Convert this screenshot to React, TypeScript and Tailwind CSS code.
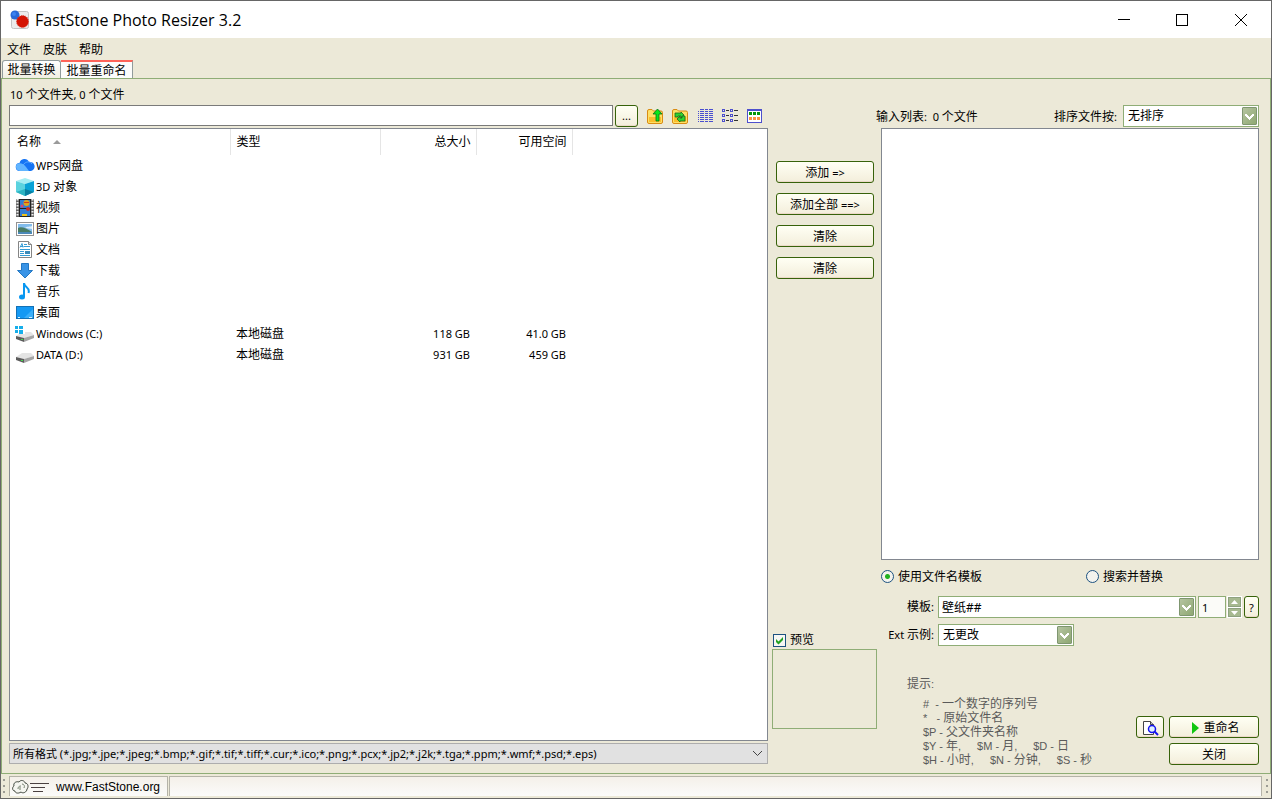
import { useState } from "react"
import type { ReactNode } from "react"

const buttonClass =
  "flex h-[22px] items-center justify-center rounded-[3px] border border-[#37620a] bg-linear-to-b from-[#fffff4] to-[#f3eedb] pt-px shadow-[inset_0_-1px_0_#ecd9c8]"

function Latin({ children }: { children: ReactNode }) {
  return <span className="whitespace-pre text-[11px]">{children}</span>
}

function Chevron() {
  return (
    <svg width="9" height="7" viewBox="0 0 9 7" shapeRendering="crispEdges">
      <path d="M0 1h2v1h1v1h1v1h1v-1h1v-1h1v-1h2v2h-1v1h-1v1h-1v1h-1v1h-1v-1h-1v-1h-1v-1h-1v-1h-1z" fill="#fff" />
    </svg>
  )
}

function ArrowBox() {
  return (
    <span className="pointer-events-none absolute top-[2px] right-[2px] flex h-[18px] w-[15px] items-center justify-center rounded-[1px] border border-[#7f9670] bg-linear-to-br from-[#b5c4a0] to-[#8fa873]">
      <Chevron />
    </span>
  )
}

function Combo({ id, options, className }: { id: string; options: string[]; className: string }) {
  return (
    <div className={`relative h-[22px] ${className}`}>
      <select
        id={id}
        className="block h-full w-full appearance-none border border-[#8fad76] bg-white pr-5 pl-[4px] text-[12px] leading-5 outline-none"
      >
        {options.map((o) => (
          <option key={o}>{o}</option>
        ))}
      </select>
      <ArrowBox />
    </div>
  )
}

function AppIcon() {
  return (
    <svg width="20" height="20" viewBox="0 0 20 20">
      <rect x="1.5" y="1.5" width="17" height="17" rx="2" fill="#ececec" stroke="#c4c4c4" />
      <circle cx="5" cy="5" r="4.5" fill="#2869d8" />
      <circle cx="4" cy="4" r="2" fill="#3c82f0" />
      <circle cx="12.500" cy="11.500" r="6" fill="#d41404" stroke="#e04030" strokeDasharray="1 1" />
    </svg>
  )
}

function CloudIcon() {
  return (
    <svg width="20" height="18" viewBox="0 0 20 18">
      <path d="M5 14a4 4 0 0 1-.5-8A5 5 0 0 1 14 5a4.600 4.600 0 0 1 2 9z" fill="#1574f4" />
      <path d="M2 7C5 5 9 7 11 10l3 4H5A4.200 4.200 0 0 1 2 7z" fill="#62b5ff" />
      <path d="M8 8c3-4 7-4 9-1" stroke="#5ba9ff" fill="none" />
    </svg>
  )
}

function CubeIcon() {
  return (
    <svg width="20" height="20" viewBox="0 0 20 20">
      <path d="M1 4l9-3 9 3-9 3z" fill="#a5eef3" />
      <path d="M1 4l9 3v12l-9-4z" fill="#5bd3df" />
      <path d="M10 7l9-3v11l-9 4z" fill="#0aa3d6" />
      <path d="M1 15l9-3v7z" fill="#2cb4c2" />
      <path d="M10 12l9 3-9 4z" fill="#087f9f" />
    </svg>
  )
}

function FilmIcon() {
  return (
    <svg width="20" height="20" viewBox="0 0 20 20">
      <path d="M1 1h18v18H1z" fill="#666" />
      <path d="M2.500 1v18M17.500 1v18" stroke="#eee" strokeWidth="2" strokeDasharray="1.500 1.500" />
      <path d="M4 1h12v18H4z" fill="#222" />
      <path d="M5 2h10v8H5zM5 11h10v7H5z" fill="#327ed5" />
      <circle cx="11.500" cy="5" r="3" fill="#e0a51c" />
      <path d="M9 4h5v1H9z" fill="#d43826" />
      <circle cx="7" cy="8" r="1.500" fill="#da4577" />
      <circle cx="13" cy="11" r="2" fill="#c72e25" />
      <path d="M7 16h5v2H7z" fill="#edc31f" />
    </svg>
  )
}

function PictureIcon() {
  return (
    <svg width="20" height="18" viewBox="0 0 20 18">
      <rect x="1.500" y="2.500" width="17" height="13" fill="#fff" stroke="#929292" />
      <path d="M3 4h14v10H3z" fill="#82bcec" />
      <path d="M10 8c2-2 5-1 7-2v3z" fill="#dceffc" />
      <path d="M3 8c3-2 8 0 14 4v2H3z" fill="#487c66" />
      <path d="M3 12h14v2H3z" fill="#4b89b9" />
    </svg>
  )
}

function DocumentIcon() {
  return (
    <svg width="20" height="20" viewBox="0 0 20 20">
      <path d="M3.500 1.500h10l3 3v13h-13z" fill="#fff" stroke="#858585" />
      <path d="M13.500 1.500v3h3" fill="#ddd" stroke="#858585" />
      <path d="M5 7.500l2-4 1 4M5.500 6.500h3M9 4.500h3M9 6.500h6M5 9.500h10M5 11.500h4M5 13.500h4M5 15.500h10" fill="none" stroke="#349bd4" />
      <path d="M10 11h5v3h-5z" fill="#3b8ab9" />
    </svg>
  )
}

function DownIcon() {
  return (
    <svg width="20" height="18" viewBox="0 0 20 18">
      <path d="M6.500 1.500h7v7h4L10 16 2.500 8.500h4z" fill="#3a94e6" stroke="#2378c4" />
    </svg>
  )
}

function MusicIcon() {
  return (
    <svg width="20" height="18" viewBox="0 0 20 18">
      <ellipse cx="7" cy="14" rx="3" ry="2.500" fill="#0897f1" />
      <path d="M9 14V0c.5 5 6.500 4 4.500 10" fill="none" stroke="#0897f1" strokeWidth="2" />
    </svg>
  )
}

function DesktopIcon() {
  return (
    <svg width="20" height="16" viewBox="0 0 20 16">
      <rect x="1.500" y="1.500" width="17" height="12" fill="#1499f4" stroke="#1371b5" />
      <path d="M9 13l9-9v9z" fill="#3baff9" />
      <path d="M3 12.500h2M14 12.500h3" stroke="#d8f1ff" />
    </svg>
  )
}

function DriveIcon({ windows }: { windows?: boolean }) {
  return (
    <svg width="20" height="18" viewBox="0 0 20 18">
      <path d="M1 11l6-4h9l3 3-10 3z" fill="#e4e4e4" />
      <path d="M1 11l8 2v4l-8-3z" fill="#5c5c5c" />
      <path d="M9 13l10-3v3L9 17z" fill="#a5a5a5" />
      <path d="M6 14h2v1H6z" fill="#46d450" />
      {windows && (
        <>
          <path d="M0 0h10v9H0z" fill="#fff" />
          <path d="M0 1h3v3H0zM4 1h4v3H4zM0 5h3v3H0zM4 5h4v4H4z" fill="#16aeea" />
        </>
      )}
    </svg>
  )
}

function Folder({ children }: { children: ReactNode }) {
  return (
    <svg width="16" height="16" viewBox="0 0 16 16">
      <path d="M.5 3Q.5 1.500 2 1.500h3L6.500 3H14q1.500 0 1.500 1.500V14q0 1.500-1.500 1.500H2Q.5 15.500.5 14z" fill="#fde066" stroke="#d98b12" />
      <path d="M2 9h12v5H2z" fill="#f9b51d" opacity=".8" />
      {children}
    </svg>
  )
}

const toolbar = [
  {
    title: "向上",
    icon: (
      <Folder>
        <path d="M10.500 1L15 6h-3v7H9V6H6z" fill="#09e619" stroke="#087018" strokeWidth=".8" />
      </Folder>
    ),
  },
  {
    title: "刷新",
    icon: (
      <Folder>
        <path d="M3 9V5h6V4l3 3-3 3V8H6v1z" fill="#2fd430" stroke="#17671b" strokeWidth=".8" />
        <path d="M13 8v5H8v1l-3-3 3-3v2h2V8z" fill="#2fd430" stroke="#17671b" strokeWidth=".8" />
      </Folder>
    ),
  },
  {
    title: "详细信息",
    icon: (
      <svg width="16" height="16" viewBox="0 0 16 16" shapeRendering="crispEdges">
        {[1, 3, 5, 7, 9, 11, 13].map((y) => (
          <g key={y} fill="#4a4fd0">
            {y > 1 && <rect x="1" y={y} width="1" height="1" />}
            <rect x="3" y={y} width="4" height="1" />
            <rect x="8" y={y} width="3" height="1" />
            <rect x="12" y={y} width="4" height="1" />
          </g>
        ))}
      </svg>
    ),
  },
  {
    title: "列表",
    icon: (
      <svg width="16" height="16" viewBox="0 0 16 16" shapeRendering="crispEdges">
        <path d="M.5 1.500h2v2h-2zM8.500 1.500h2v2h-2zM.5 6.500h2v2h-2zM8.500 6.500h2v2h-2zM.5 11.500h2v2h-2zM8.500 11.500h2v2h-2z" fill="none" stroke="#4d50cd" />
        <path d="M4 2.500h3M12 2.500h4M4 7.500h3M12 7.500h4M4 12.500h3M12 12.500h4" stroke="#333" />
      </svg>
    ),
  },
  {
    title: "缩略图",
    icon: (
      <svg width="16" height="16" viewBox="0 0 16 16" shapeRendering="crispEdges">
        <path d="M.5 1.500h14v13H.5z" fill="#fff" stroke="#4d50cd" />
        <path d="M0 1h15v2H0z" fill="#4d50cd" />
        <path d="M2 4h3v3H2zM6 4h3v3H6zM10 4h3v3h-3z" fill="#06950c" />
        <path d="M2 9h3v3H2zM6 9h3v3H6zM10 9h3v3h-3z" fill="#ff9343" />
      </svg>
    ),
  },
]

const rows = [
  { icon: <CloudIcon />, name: <><Latin>WPS</Latin>网盘</> },
  { icon: <CubeIcon />, name: <><Latin>3D </Latin>对象</> },
  { icon: <FilmIcon />, name: "视频" },
  { icon: <PictureIcon />, name: "图片" },
  { icon: <DocumentIcon />, name: "文档" },
  { icon: <DownIcon />, name: "下载" },
  { icon: <MusicIcon />, name: "音乐" },
  { icon: <DesktopIcon />, name: "桌面" },
  { icon: <DriveIcon windows />, name: <Latin>Windows (C:)</Latin>, type: "本地磁盘", size: "118 GB", free: "41.0 GB" },
  { icon: <DriveIcon />, name: <Latin>DATA (D:)</Latin>, type: "本地磁盘", size: "931 GB", free: "459 GB" },
]

const filter =
  "所有格式 (*.jpg;*.jpe;*.jpeg;*.bmp;*.gif;*.tif;*.tiff;*.cur;*.ico;*.png;*.pcx;*.jp2;*.j2k;*.tga;*.ppm;*.wmf;*.psd;*.eps)"

function TitleBar() {
  return (
    <header className="flex h-[37px] items-center bg-white pl-[9px]">
      <AppIcon />
      <h1 className="ml-[5px] flex-1 font-['Open_Sans','Noto_Sans',sans-serif] text-[16px] leading-6">FastStone Photo Resizer 3.2</h1>
      <button aria-label="最小化" className="flex h-full w-[58px] items-center justify-center">
        <svg width="12" height="12" viewBox="0 0 12 12" shapeRendering="crispEdges">
          <path d="M0 5.500h12" stroke="#000" />
        </svg>
      </button>
      <button aria-label="最大化" className="flex h-full w-[58px] items-center justify-center">
        <svg width="12" height="12" viewBox="0 0 12 12" shapeRendering="crispEdges">
          <path d="M.5.500h11v11H.5z" fill="none" stroke="#000" />
        </svg>
      </button>
      <button aria-label="关闭窗口" className="flex h-full w-[60px] items-center justify-center">
        <svg width="12" height="12" viewBox="0 0 12 12">
          <path d="M0 0l12 12M12 0L0 12" stroke="#000" />
        </svg>
      </button>
    </header>
  )
}

function FileBrowser() {
  return (
    <section className="flex min-w-0 flex-1 flex-col">
      <p className="mt-[7px] h-[18px] pl-px leading-[18px]">
        <Latin>10 </Latin>个文件夹<Latin>, 0 </Latin>个文件
      </p>
      <div className="flex h-6 items-center pb-px">
        <input aria-label="路径" className="h-[21px] min-w-0 flex-1 border border-[#7a7a7a] bg-white px-1 outline-none" />
        <button className={`${buttonClass} ml-[2px] w-[23px] text-[11px]`}>...</button>
        <div className="mr-[5px] ml-[9px] flex gap-[9px]">
          {toolbar.map((t) => (
            <button key={t.title} title={t.title}>
              {t.icon}
            </button>
          ))}
        </div>
      </div>
      <div className="flex-1 border border-[#828790] bg-white">
        <table className="w-full table-fixed border-collapse">
          <colgroup>
            <col className="w-[220px]" />
            <col className="w-[150px]" />
            <col className="w-[96px]" />
            <col className="w-[96px]" />
            <col />
          </colgroup>
          <thead>
            <tr className="h-[26px] *:font-normal">
              <th className="border-r border-[#e5e5e5] p-0 pl-[7px] text-left">
                <span className="flex items-center gap-3">
                  名称
                  <svg width="8" height="4" viewBox="0 0 8 4">
                    <path d="M0 4l4-4 4 4z" fill="#9a9a9a" />
                  </svg>
                </span>
              </th>
              <th className="border-r border-[#e5e5e5] p-0 pl-[6px] text-left">类型</th>
              <th className="border-r border-[#e5e5e5] p-0 pr-[5px] text-right">总大小</th>
              <th className="border-r border-[#e5e5e5] p-0 pr-[5px] text-right">可用空间</th>
              <th className="p-0" />
            </tr>
          </thead>
          <tbody>
            {rows.map((r, i) => (
              <tr key={i} className="h-[21px] *:p-0">
                <td>
                  <span className="flex h-[21px] items-center pl-[5px]">
                    {r.icon}
                    <span className="ml-px">{r.name}</span>
                  </span>
                </td>
                <td>
                  <span className="pl-[6px]">{r.type}</span>
                </td>
                <td className="text-right text-[11px]">
                  <span className="pr-[6px]">{r.size}</span>
                </td>
                <td className="text-right text-[11px]">
                  <span className="pr-[6px]">{r.free}</span>
                </td>
                <td />
              </tr>
            ))}
          </tbody>
        </table>
      </div>
      <div className="relative mt-[2px] h-[21px]">
        <select
          aria-label="文件格式"
          className="block h-full w-full appearance-none border border-[#adadad] bg-[#e1e1e1] pr-6 pl-[3px] text-[11px] outline-none"
        >
          <option>{filter}</option>
        </select>
        <svg width="11" height="7" viewBox="0 0 11 7" className="pointer-events-none absolute top-[7px] right-[5px]">
          <path d="M1 1l4.500 4.500L10 1" fill="none" stroke="#444" />
        </svg>
      </div>
    </section>
  )
}

function Actions() {
  const [preview, setPreview] = useState(true)

  return (
    <section className="flex w-[105px] shrink-0 flex-col">
      <div className="mt-[82px] flex flex-col gap-[10px] pr-[3px] pl-1">
        <button className={buttonClass}>
          添加<Latin> =&gt;</Latin>
        </button>
        <button className={buttonClass}>
          添加全部<Latin> ==&gt;</Latin>
        </button>
        <button className={buttonClass}>清除</button>
        <button className={buttonClass}>清除</button>
      </div>
      <label className="mt-auto flex h-[18px] items-center pl-px">
        <span className="relative flex size-[13px]">
          <input
            type="checkbox"
            checked={preview}
            onChange={(e) => setPreview(e.target.checked)}
            className="size-[13px] appearance-none border border-[#1c5180] bg-[#f6f6f3]"
          />
          {preview && (
            <svg width="13" height="13" viewBox="0 0 13 13" className="pointer-events-none absolute inset-0">
              <path d="M3 5l2.500 2.500L10 3v3l-4.500 4.500L3 8z" fill="#21a121" />
            </svg>
          )}
        </span>
        <span className="ml-1">预览</span>
      </label>
      <div className="mb-[35px] h-20 border border-[#8fad76]" />
    </section>
  )
}

function Radio({ label, checked, onChange }: { label: string; checked: boolean; onChange: () => void }) {
  return (
    <label className="flex items-center gap-1">
      <input
        type="radio"
        name="mode"
        checked={checked}
        onChange={onChange}
        className="size-[13px] appearance-none rounded-full border border-[#1c5180] bg-[#f3f3ee] checked:bg-[radial-gradient(circle,#21b121_2px,#f3f3ee_3px)]"
      />
      {label}
    </label>
  )
}

function Hints() {
  return (
    <div className="flex-1 pl-[26px] font-['Liberation_Sans','Noto_Sans_CJK_SC',sans-serif] text-[#5a5a5a]">
      <p className="h-5 leading-5">提示<Latin>:</Latin></p>
      <div className="mt-[3px] pl-4 leading-[14px]">
        <p className="h-[14px]"><Latin>#  - </Latin>一个数字的序列号</p>
        <p className="h-[14px]"><Latin>*   - </Latin>原始文件名</p>
        <p className="h-[14px]"><Latin>$P - </Latin>父文件夹名称</p>
        <p className="flex h-[14px] gap-4">
          <span><Latin>$Y - </Latin>年<Latin>,</Latin></span>
          <span><Latin>$M - </Latin>月<Latin>,</Latin></span>
          <span><Latin>$D - </Latin>日</span>
        </p>
        <p className="flex h-[14px] gap-4">
          <span><Latin>$H - </Latin>小时<Latin>,</Latin></span>
          <span><Latin>$N - </Latin>分钟<Latin>,</Latin></span>
          <span><Latin>$S - </Latin>秒</span>
        </p>
      </div>
    </div>
  )
}

function RenamePanel() {
  const [mode, setMode] = useState("template")
  const [template, setTemplate] = useState("壁纸##")
  const [start, setStart] = useState("1")

  return (
    <section className="flex w-[378px] shrink-0 flex-col">
      <div className="mt-[26px] flex h-[22px] items-center">
        <span className="-ml-[5px] flex-1 pt-[2px]">
          输入列表<Latin>:  0 </Latin>个文件
        </span>
        <label htmlFor="sort" className="mr-[6px] pt-[2px]">
          排序文件按<Latin>:</Latin>
        </label>
        <Combo id="sort" className="w-[136px]" options={["无排序"]} />
      </div>
      <div className="mt-px flex-1 border border-[#828790] bg-white" />
      <div className="mt-[7px] grid h-[19px] grid-cols-[205px_1fr] items-center">
        <Radio label="使用文件名模板" checked={mode === "template"} onChange={() => setMode("template")} />
        <Radio label="搜索并替换" checked={mode === "search"} onChange={() => setMode("search")} />
      </div>
      <div className="mt-[10px] flex h-[22px] items-center">
        <label htmlFor="template" className="w-[53px] text-right">
          模板<Latin>:</Latin>
        </label>
        <div className="relative ml-1 h-full flex-1">
          <input
            id="template"
            value={template}
            onChange={(e) => setTemplate(e.target.value)}
            className="block h-full w-full border border-[#8fad76] bg-white pr-5 pl-[3px] text-[12px] outline-none"
          />
          <ArrowBox />
        </div>
        <input
          aria-label="起始序号"
          value={start}
          onChange={(e) => setStart(e.target.value)}
          className="ml-[2px] h-full w-7 border border-[#8fad76] bg-[#fbfbf8] pl-[3px] text-[11px] outline-none"
        />
        <div className="ml-px flex h-full w-[15px] flex-col justify-between border border-white bg-white">
          <button aria-label="增加" className="flex h-[10px] items-center justify-center border border-[#8ea27f] bg-[#a7b990]">
            <svg width="7" height="4" viewBox="0 0 7 4">
              <path d="M0 4L3.500 0 7 4z" fill="#fff" />
            </svg>
          </button>
          <button aria-label="减少" className="flex h-[9px] items-center justify-center border border-[#8ea27f] bg-[#a7b990]">
            <svg width="7" height="4" viewBox="0 0 7 4">
              <path d="M0 0l3.500 4L7 0z" fill="#fff" />
            </svg>
          </button>
        </div>
        <button className={`${buttonClass} ml-[2px] w-[15px] text-[11px]`}>?</button>
      </div>
      <div className="mt-[6px] flex h-[22px] items-center">
        <label htmlFor="ext" className="w-[53px] text-right">
          <Latin>Ext </Latin>示例<Latin>:</Latin>
        </label>
        <Combo id="ext" className="ml-1 w-[136px]" options={["无更改"]} />
      </div>
      <div className="mt-[28px] mb-[-3px] flex">
        <Hints />
        <div className="flex items-end gap-[5px] pb-[2px]">
          <button aria-label="预览文件名" className={`${buttonClass} mb-[27px] w-7`}>
            <svg width="17" height="16" viewBox="0 0 17 16">
              <path d="M1.500 1.500h7l3 3v10h-10z" fill="#fff" stroke="#444" />
              <path d="M8.500 1.500v3h3" fill="#bbb" stroke="#444" />
              <circle cx="10" cy="9" r="3.500" fill="#dff1ff" stroke="#1212ef" strokeWidth="1.500" />
              <path d="M12.500 11.500L16 15" stroke="#1212ef" strokeWidth="2" />
            </svg>
          </button>
          <div className="flex w-[90px] flex-col gap-[5px]">
            <button className={`${buttonClass} gap-1 pl-1`}>
              <svg width="7" height="12" viewBox="0 0 7 12">
                <path d="M0 0l7 6-7 6z" fill="#10c610" />
              </svg>
              重命名
            </button>
            <button className={buttonClass}>关闭</button>
          </div>
        </div>
      </div>
    </section>
  )
}

function Grip() {
  return (
    <svg width="3" height="16" viewBox="0 0 3 16" shapeRendering="crispEdges">
      <path d="M0 1h2v2H0zM0 7h2v2H0zM0 13h2v2H0z" fill="#9c9c94" />
    </svg>
  )
}

function StatusBar() {
  return (
    <footer className="flex h-6 items-center bg-[#ece9d8] px-[2px]">
      <Grip />
      <div className="ml-[3px] flex h-[20px] w-[159px] items-center border-t border-r border-l border-[#b5b3a8] bg-linear-to-b from-[#f4f0e9] to-[#fbfbfa] pl-px">
        <svg width="40" height="16" viewBox="0 0 40 16">
          <path d="M3 7c-1-3 2-5 5-4 2-3 6-1 6 1 3 0 4 4 2 6 0 3-4 5-6 3-3 2-6 1-6-1-3 0-3-4-1-5z" fill="#f4f5f0" stroke="#444b42" />
          <path d="M7 10c0-2 1-3 3-3M11 5c2 0 3 2 2 4M9 8v3" fill="none" stroke="#74806f" />
          <path d="M19 4.500h19M20 8.500h14M22 12.500h10" stroke="#4a4040" />
        </svg>
        <a href="#" className="ml-[5px] font-['Liberation_Sans',sans-serif] text-[12px]">
          www.FastStone.org
        </a>
      </div>
      <div className="ml-px h-[20px] flex-1 border-t border-r border-l border-[#b5b3a8] bg-linear-to-b from-[#f4f0e9] to-[#fbfbfa]" />
      <span className="ml-1">
        <Grip />
      </span>
    </footer>
  )
}

export default function App() {
  return (
    <div className="flex min-h-screen flex-col border border-[#666] bg-[#ece9d8] font-['Noto_Sans','Noto_Sans_CJK_SC',sans-serif] text-[12px] leading-[18px] text-black">
      <TitleBar />
      <nav className="flex h-[22px] items-center gap-3 pt-px pl-[6px]">
        <button>文件</button>
        <button>皮肤</button>
        <button>帮助</button>
      </nav>
      <div role="tablist" className="flex h-[18px] items-end pl-px">
        <button
          role="tab"
          aria-selected="false"
          className="h-[18px] w-[59px] rounded-t-[3px] border border-b-0 border-[#919b9c] bg-linear-to-b from-white to-[#f0eee2]"
        >
          批量转换
        </button>
        <button
          role="tab"
          aria-selected="true"
          className="-mb-px h-[19px] w-[72px] border-t-2 border-r border-[#919b9c] border-t-[#ff6459] bg-[#fcfcfb] leading-4"
        >
          批量重命名
        </button>
      </div>
      <main className="flex flex-1 gap-1 border border-[#8fad76] pr-[11px] pb-[9px] pl-[7px]">
        <FileBrowser />
        <Actions />
        <RenamePanel />
      </main>
      <StatusBar />
    </div>
  )
}
